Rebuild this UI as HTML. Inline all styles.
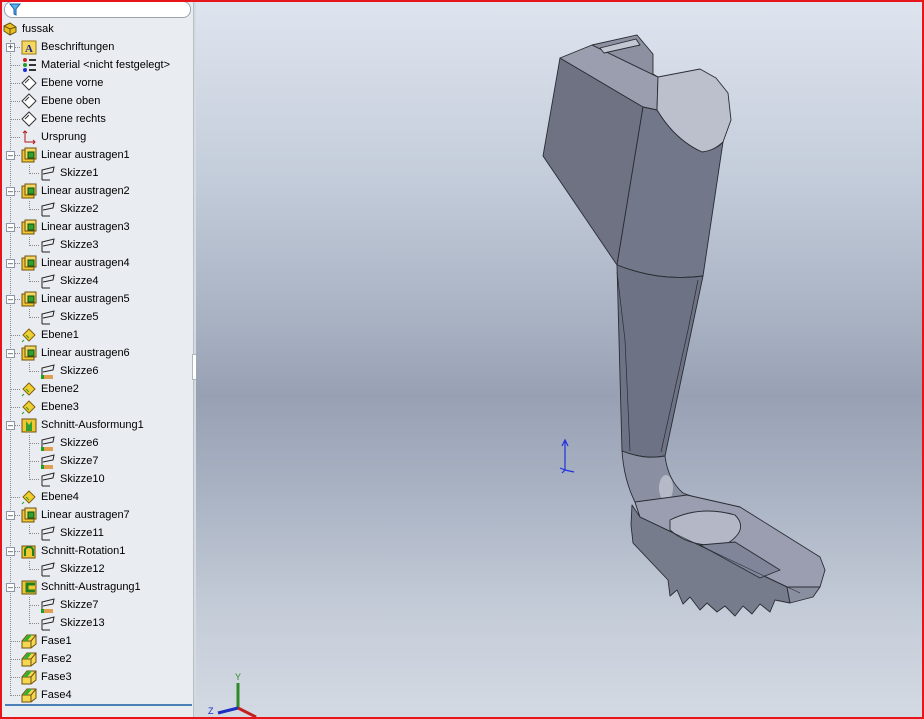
<!DOCTYPE html>
<html><head><meta charset="utf-8"><style>
*{margin:0;padding:0;box-sizing:border-box}
body{width:924px;height:719px;overflow:hidden;position:relative;font-family:"Liberation Sans",Tahoma,sans-serif;font-size:11px;color:#000;background:#fff}
#frame{position:absolute;left:0;top:0;width:924px;height:719px;border:2px solid #e8141c;z-index:10;pointer-events:none}
#panel{position:absolute;left:0;top:0;width:193px;height:719px;background:#e9ecf1}
#split{position:absolute;left:193px;top:0;width:3px;height:719px;background:#d5d9e0;border-left:1px solid #b8bec8}
#view{position:absolute;left:196px;top:0;width:728px;height:719px;background:linear-gradient(#dfe5ef 0%,#c3ccda 25%,#a8b1c2 45%,#97a1b3 55%,#a9b2c3 68%,#c4ccd8 85%,#d4dae3 100%)}
#filter{position:absolute;left:4px;top:1px;width:187px;height:17px;border:1px solid #9aa3b0;border-radius:8px;background:#fff}
.r{position:absolute;height:18px;line-height:18px;white-space:nowrap}
.ic{position:absolute;width:16px;height:16px;top:1px}
.dv{position:absolute;border-left:1px dotted #8a8a8a}
.dh{position:absolute;border-top:1px dotted #8a8a8a;height:0}
.bx{position:absolute;width:9px;height:9px;border:1px solid #8a95a5;background:#fff;font-size:9px;line-height:7px;text-align:center;color:#222}
</style></head><body>
<div id="panel">
<div id="filter"><svg style="position:absolute;left:4px;top:1px" width="12" height="13"><path d="M1 1h10l-4 5v6l-2-1V6z" fill="#5ab0ea" stroke="#1a5fa8"/></svg></div>
<div class="dv" style="left:10px;top:40px;height:656px"></div>
<div class="dv" style="left:29px;top:165px;height:9px"></div>
<div class="dv" style="left:29px;top:201px;height:9px"></div>
<div class="dv" style="left:29px;top:237px;height:9px"></div>
<div class="dv" style="left:29px;top:273px;height:9px"></div>
<div class="dv" style="left:29px;top:309px;height:9px"></div>
<div class="dv" style="left:29px;top:363px;height:9px"></div>
<div class="dv" style="left:29px;top:435px;height:45px"></div>
<div class="dv" style="left:29px;top:525px;height:9px"></div>
<div class="dv" style="left:29px;top:561px;height:9px"></div>
<div class="dv" style="left:29px;top:597px;height:27px"></div>
<div id="tree"></div>
<div style="position:absolute;left:5px;top:704px;width:187px;height:2px;background:#4a7fb8"></div>
</div>
<div id="split"><div style="position:absolute;left:-2px;top:354px;width:7px;height:26px;background:#fff;border:1px solid #b0b6c0"></div></div>
<div id="view">
<svg width="728" height="719" viewBox="196 0 728 719" style="position:absolute;left:0;top:0">
<g stroke="#2a2c33" stroke-width="0.9" stroke-linejoin="round">
<polygon points="560,58 543,156 617,265 643,107" fill="#6e7283"/>
<polygon points="560,58 592,45 658,77 657,110 643,107" fill="#9a9eae"/>
<polygon points="592,45 637,35 653,54 653,74 658,77" fill="#8c90a0"/>
<polygon points="600,48 636,39 640,45 604,53" fill="#c3c7d3"/>
<path d="M658,77 L700,69 L716,78 L728,93 L731,120 L723,142 Q712,152 702,152 Q675,140 657,110 Z" fill="#bcc0cd"/>
<path d="M643,107 L657,110 Q675,140 702,152 Q716,150 723,142 L703,276 Q660,282 617,265 Z" fill="#72778a"/>
<path d="M617,265 Q660,282 703,276 L665,456 Q645,460 622,451 Z" fill="#6d7284"/>
<path d="M698,280 L688,330 L661,452" fill="none" stroke-width="0.7"/>
<path d="M617,272 L625,340 L630,451" fill="none" stroke-width="0.7"/>
<polygon points="632,505 640,517 787,587 790,603 775,600 770,612 760,604 752,614 743,606 735,616 725,606 717,612 707,603 700,610 690,597 683,604 677,590 670,596 668,580 633,543 631,525" fill="#777c8d"/>
<path d="M622,451 Q645,460 665,456 Q668,480 683,493 Q700,500 740,507 L640,517 L635,502 Q624,480 622,451 Z" fill="#8a8fa1"/>
<ellipse cx="666" cy="488" rx="7" ry="13" fill="#c9ccd8" stroke="none" opacity="0.7"/>
<polygon points="635,502 687,495 740,507 820,557 825,570 820,587 800,593 640,517" fill="#9a9eb0"/>
<path d="M670,520 Q700,505 735,515 Q750,530 725,545 Q690,548 670,530 Z" fill="#b4b8c6"/>
<polygon points="700,545 735,542 780,570 760,578" fill="#80859a"/>
<polygon points="787,587 820,587 813,597 790,603" fill="#8a8fa0"/>
<line x1="640" y1="517" x2="800" y2="593" stroke-width="0.6"/>
</g>
<g stroke="#2030e0" stroke-width="1.2" fill="none"><path d="M565,470 V440 M562,446 L565,440 L568,446 M565,470 L574,472 M560,468 L565,470 L562,473"/></g>
<g stroke-width="3" fill="none"><path d="M238,708 V683" stroke="#2f8a2a"/><path d="M238,708 L218,713" stroke="#1c2fc0"/><path d="M238,708 L256,717" stroke="#c22020"/></g>
<text x="235" y="680" font-size="9" fill="#2f8a2a" font-family="Liberation Sans">Y</text>
<text x="208" y="714" font-size="9" fill="#1c2fc0" font-family="Liberation Sans">Z</text>
</svg>
</div>
<div id="frame"></div>
<script>
var items=[
[29,0,'root','fussak'],[47,1,'ann','Beschriftungen','+'],[65,1,'mat','Material &lt;nicht festgelegt&gt;'],
[83,1,'pl','Ebene vorne'],[101,1,'pl','Ebene oben'],[119,1,'pl','Ebene rechts'],[137,1,'org','Ursprung'],
[155,1,'ext','Linear austragen1','-'],[173,2,'sk','Skizze1'],[191,1,'ext','Linear austragen2','-'],[209,2,'sk','Skizze2'],
[227,1,'ext','Linear austragen3','-'],[245,2,'sk','Skizze3'],[263,1,'ext','Linear austragen4','-'],[281,2,'sk','Skizze4'],
[299,1,'ext','Linear austragen5','-'],[317,2,'sk','Skizze5'],[335,1,'py','Ebene1'],[353,1,'ext','Linear austragen6','-'],
[371,2,'sk2','Skizze6'],[389,1,'py','Ebene2'],[407,1,'py','Ebene3'],[425,1,'loft','Schnitt-Ausformung1','-'],
[443,2,'sk2','Skizze6'],[461,2,'sk2','Skizze7'],[479,2,'sk','Skizze10'],[497,1,'py','Ebene4'],
[515,1,'ext','Linear austragen7','-'],[533,2,'sk','Skizze11'],[551,1,'rev','Schnitt-Rotation1','-'],[569,2,'sk','Skizze12'],
[587,1,'cut','Schnitt-Austragung1','-'],[605,2,'sk2','Skizze7'],[623,2,'sk','Skizze13'],
[641,1,'fa','Fase1'],[659,1,'fa','Fase2'],[677,1,'fa','Fase3'],[695,1,'fa','Fase4']];
var ic={
root:'<path d="M2 5l6-3 6 4v5l-6 3-6-4z" fill="#e8c020" stroke="#6a5010"/><path d="M2 5l6 3 6-2M8 8v6" stroke="#6a5010" fill="none"/>',
ann:'<rect x="1" y="2" width="14" height="13" fill="#f5d862" stroke="#a07a10"/><text x="4" y="13" font-size="11" font-weight="bold" fill="#1a2a90" font-family="Liberation Serif">A</text>',
mat:'<circle cx="4" cy="3" r="2" fill="#d02020"/><circle cx="4" cy="8" r="2" fill="#20a020"/><circle cx="4" cy="13" r="2" fill="#2030d0"/><path d="M8 3h7M8 8h7M8 13h7" stroke="#333" stroke-width="2"/>',
pl:'<path d="M8 1l7 7-7 7-7-7z" fill="#fff" stroke="#333"/><path d="M4 8l4-4" stroke="#333" fill="none"/>',
py:'<path d="M8 2l6 6-6 6-6-6z" fill="#f0d030" stroke="#806010"/><path d="M5 8l3 3M3 13l-2 2" stroke="#20a020"/>',
org:'<path d="M4 2v11h10M2 4l2-2 2 2M12 11l2 2-2 2" stroke="#b01818" fill="none"/>',
ext:'<rect x="1" y="3" width="12" height="12" fill="#f0c830" stroke="#705010"/><rect x="4" y="1" width="11" height="11" fill="#f5d860" stroke="#705010"/><rect x="7" y="5" width="6" height="6" fill="#30a030" stroke="#105010"/>',
loft:'<rect x="1" y="2" width="14" height="13" fill="#f0c830" stroke="#705010"/><path d="M5 14V4l3 4 3-4v10z" fill="#30a030"/>',
rev:'<rect x="1" y="3" width="13" height="12" fill="#f0c830" stroke="#705010"/><path d="M4 13V7a4 3 0 0 1 8 0v6" stroke="#208020" stroke-width="2" fill="none"/>',
cut:'<rect x="1" y="2" width="14" height="13" fill="#f0c830" stroke="#705010"/><path d="M14 5H6v7h8" stroke="#208020" stroke-width="3" fill="none"/>',
sk:'<path d="M2 15V5l12-3-1 5-10 2M2 15h8" stroke="#222" fill="none"/>',
sk2:'<path d="M2 12V5l12-3-1 5-10 2" stroke="#222" fill="none"/><rect x="1" y="12" width="3" height="4" fill="#20a020"/><rect x="4" y="12" width="9" height="4" fill="#e0a050"/>',
fa:'<path d="M1 8l5-6h9v9l-5 4H1z" fill="#f5d850" stroke="#705010"/><path d="M1 8h9l5-6M10 8v7" stroke="#705010" fill="none"/><path d="M2 8l5-6h4L6 8z" fill="#30b030"/>'};
var h='';
items.forEach(function(it){
 var y=it[0]-9,l=it[1],tx=l==0?22:(l==1?41:60),ix=l==0?2:(l==1?21:40);
 if(l==1)h+='<div class="dh" style="left:11px;top:'+(y+9)+'px;width:9px"></div>';
 if(l==2)h+='<div class="dh" style="left:30px;top:'+(y+9)+'px;width:9px"></div>';
 if(it[4])h+='<div class="bx" style="left:6px;top:'+(y+5)+'px">'+(it[4]=='+'?'+':'&#8211;')+'</div>';
 h+='<svg class="ic" style="left:'+ix+'px;top:'+(y+1)+'px" viewBox="0 0 16 16">'+ic[it[2]]+'</svg>';
 h+='<div class="r" style="left:'+tx+'px;top:'+y+'px">'+it[3]+'</div>';
});
document.getElementById('tree').innerHTML=h;
</script>
</body></html>
